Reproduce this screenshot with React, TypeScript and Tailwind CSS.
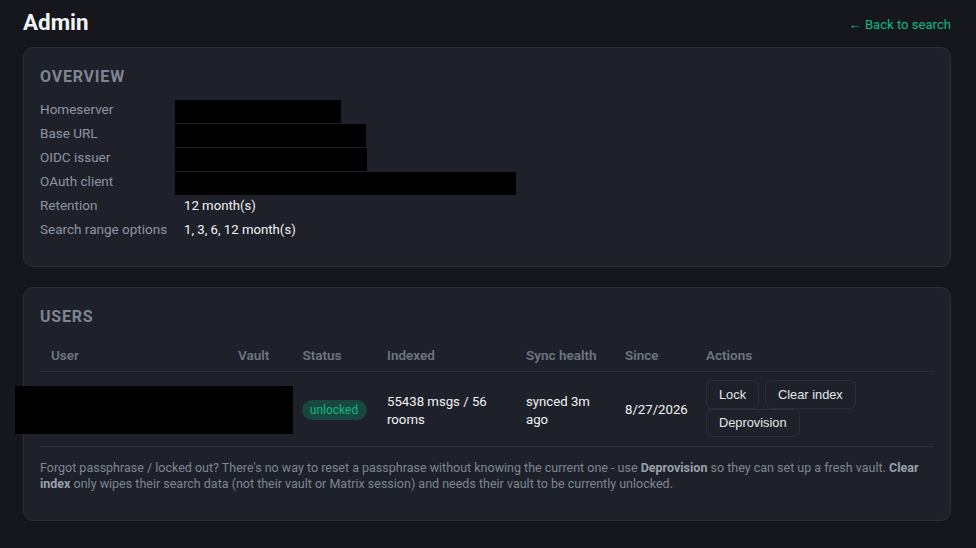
const font = { fontFamily: 'Roboto, "Noto Sans", sans-serif' }

const overview = [
  { label: 'Homeserver', redacted: 'w-[166px]' },
  { label: 'Base URL', redacted: 'w-[191px]' },
  { label: 'OIDC issuer', redacted: 'w-[192px]' },
  { label: 'OAuth client', redacted: 'w-[341px]' },
  { label: 'Retention', value: '12 month(s)' },
  { label: 'Search range options', value: '1, 3, 6, 12 month(s)' },
]

const cols = 'grid-cols-[187px_64.5px_84.5px_139px_99px_81px_1fr]'

const btn =
  "h-[28.5px] rounded-md border border-[#2c2f38] bg-[#1e2129] px-[12px] pt-[1px] font-['Liberation_Sans',sans-serif] text-[12.8px] text-[#e5e7eb]"

export default function App() {
  return (
    <div className="h-[548px] w-[976px] overflow-hidden bg-[#15171c] px-[23px] pt-[9px] text-[13.5px] text-[#e5e7eb]" style={font}>
      <div className="mb-[11px] flex h-[27px] w-[928px] items-start justify-between">
        <h1 className="text-[22.4px] leading-[27px] font-bold text-[#f1f3f5]">Admin</h1>
        <a className="mt-[6px] text-[13.1px] leading-[19px] text-[#10b981]">← Back to search</a>
      </div>

      <section className="mb-[20px] h-[220px] w-[928px] rounded-[10px] border border-[#2c2f38] bg-[#1e2129] px-4 pt-[18px]">
        <h2 className="mb-[10px] text-[16px] leading-[21px] font-bold tracking-[0.8px] text-[#7f8594]">OVERVIEW</h2>
        <div>
          {overview.map(r => (
            <div key={r.label} className="flex h-[24px] items-center">
              <span className="w-[135px] shrink-0 whitespace-nowrap text-[#8f95a3]">{r.label}</span>
              {r.redacted ? (
                <span className={`mt-[5px] h-[23px] bg-black ${r.redacted}`} />
              ) : (
                <span className="mt-[1px] pl-[9px] text-[13.2px] text-[#f1f3f5]">{r.value}</span>
              )}
            </div>
          ))}
        </div>
      </section>

      <section className="relative h-[234px] w-[928px] rounded-[10px] border border-[#2c2f38] bg-[#1e2129] px-4 pt-[18px]">
        <h2 className="mb-[10px] text-[16px] leading-[21px] font-bold tracking-[0.8px] text-[#7f8594]">USERS</h2>
        <div className={`grid ${cols} h-[35px] items-center border-b border-[#2c2f38] pt-[3px] pl-[11px] font-semibold text-[#6f7583]`}>
          <span>User</span>
          <span>Vault</span>
          <span>Status</span>
          <span>Indexed</span>
          <span>Sync health</span>
          <span>Since</span>
          <span>Actions</span>
        </div>
        <div className={`grid h-[75px] ${cols} items-center border-b border-[#2c2f38] pl-[11px] text-[13.2px] leading-[18px] text-[#f1f3f5]`}>
          <span />
          <span />
          <span className="mt-[1px] -ml-[1px] w-[65px] rounded-full bg-[#17473e] py-[1px] text-center text-[12px] leading-[18px] text-[#10b981]">unlocked</span>
          <span className="mt-[4px] w-[120px]">55438 msgs / 56 rooms</span>
          <span className="mt-[4px] w-[80px]">synced 3m ago</span>
          <span className="mt-[2px]">8/27/2026</span>
          <div className="-mt-[1px] flex flex-wrap gap-x-[6px]">
            <button className={btn}>Lock</button>
            <button className={btn}>Clear index</button>
            <button className={btn}>Deprovision</button>
          </div>
        </div>
        <p className="mt-[13px] text-[12.5px] leading-[16px] text-[#7f8594]">
          Forgot passphrase / locked out? There's no way to reset a passphrase without knowing the current one - use{' '}
          <strong className="text-[#9aa0ad]">Deprovision</strong> so they can set up a fresh vault.{' '}
          <strong className="text-[#9aa0ad]">Clear index</strong> only wipes their search data (not their vault or Matrix session) and needs their vault to be currently unlocked.
        </p>
        <div className="absolute top-[98px] left-[-9px] h-[48px] w-[278px] bg-black" />
      </section>
    </div>
  )
}
